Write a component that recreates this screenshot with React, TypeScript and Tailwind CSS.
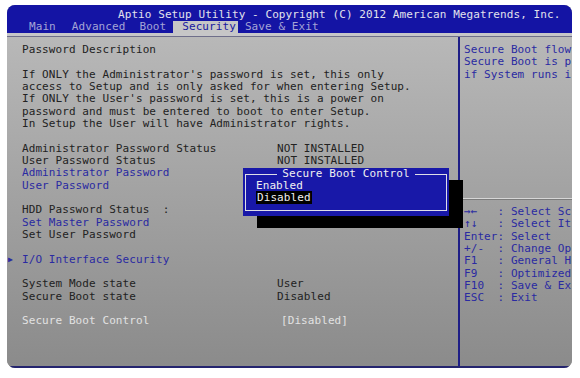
const MONO = "font-['DejaVu_Sans_Mono',monospace] text-[11px] tracking-[0.08px] leading-[12.36px] whitespace-pre";

type Row = { label?: string; value?: string; tone?: "dark" | "blue" | "light"; arrow?: boolean };

const rows: Row[] = [
  { label: "Password Description" },
  {},
  { label: "If ONLY the Administrator's password is set, this only" },
  { label: "access to Setup and is only asked for when entering Setup." },
  { label: "If ONLY the User's password is set, this is a power on" },
  { label: "password and must be entered to boot to enter Setup." },
  { label: "In Setup the User will have Administrator rights." },
  {},
  { label: "Administrator Password Status", value: "NOT INSTALLED" },
  { label: "User Password Status", value: "NOT INSTALLED" },
  { label: "Administrator Password", tone: "blue" },
  { label: "User Password", tone: "blue" },
  {},
  { label: "HDD Password Status  :" },
  { label: "Set Master Password", tone: "blue" },
  { label: "Set User Password" },
  {},
  { label: "I/O Interface Security", tone: "blue", arrow: true },
  {},
  { label: "System Mode state", value: "User" },
  { label: "Secure Boot state", value: "Disabled" },
  {},
  { label: "Secure Boot Control", value: "[Disabled]", tone: "light" },
];

// help panel is cut at the screen edge in the photo
const keys = [
  "→←   : Select Sc",
  "↑↓   : Select It",
  "Enter: Select",
  "+/-  : Change Op",
  "F1   : General H",
  "F9   : Optimized",
  "F10  : Save & Ex",
  "ESC  : Exit",
];

function toneClass(tone?: Row["tone"]) {
  if (tone === "blue") return "text-[#2a2aa2]";
  if (tone === "light") return "text-[#e2e2e2]";
  return "text-[#222222]";
}

export default function App() {
  return (
    <div className={`min-h-screen bg-white pt-[5px] pl-[7px] ${MONO}`}>
      <div className="flex h-[363px] w-[565px] flex-col overflow-hidden rounded-[8px] bg-[#8a8a8a]">
        {/* header */}
        <div className="h-[28px] bg-[#1414a4]">
          <div className="h-[15px] pl-[111px] pt-[4px] text-[#e2e2ec]">
            Aptio Setup Utility - Copyright (C) 2012 American Megatrends, Inc.
          </div>
          <div className="flex h-[13px] items-end pl-[22px] text-[#a4a4d6]">
            <span>Main</span>
            <span className="ml-[16px]">Advanced</span>
            <span className="ml-[14px]">Boot</span>
            <span className="ml-[7px] bg-[#c6c6c6] pl-[9px] pr-[2px] text-[#1818a0]">Security</span>
            <span className="ml-[7px]">Save & Exit</span>
          </div>
        </div>
        <div className="h-[3px] bg-[#c6c6c8]" />
        <div className="h-[1px] bg-[#6e6e8a]" />

        {/* body */}
        <div className="relative flex flex-1 bg-gradient-to-b from-[#b8b8b8] to-[#8b8b8b]">
          <div className="w-[451px] pt-[7px]">
            {rows.map((r, i) => (
              <div key={i} className={`flex h-[12.33px] ${toneClass(r.tone)}`}>
                <span className="flex w-[15px] items-center pl-[1px]">
                  {r.arrow && <span className="text-[8px] leading-none text-[#2a2aa2]">▶</span>}
                </span>
                <span className="w-[255px]">{r.label ?? ""}</span>
                {r.value && (
                  <span className={r.tone === "light" ? "ml-[4px]" : ""}>{r.value}</span>
                )}
              </div>
            ))}
          </div>

          <div className="w-[2px] bg-[#1e1e86]" />

          <div className="flex-1 overflow-hidden pt-[7px] pl-[4px] text-[#2a2aa2]">
            <div>Secure Boot flow</div>
            <div>Secure Boot is p</div>
            <div>if System runs i</div>
            <div className="h-[117px]" />
            <div className="-ml-[4px] h-[1px] bg-[#d6d6d6]" />
            <div className="-ml-[4px] h-[1px] bg-[#7c7c7c]" />
            <div className="h-[6px]" />
            {keys.map((k) => (
              <div key={k} className="h-[12.33px]">{k}</div>
            ))}
          </div>

          {/* popup dialog */}
          <div className="absolute left-[250px] top-[143px] h-[48px] w-[206px] bg-black" />
          <div className="absolute left-[236px] top-[131px] h-[48px] w-[206px] bg-[#1818a8] px-[2px] pt-[6px] pb-[5px]">
            <div className="relative h-full border border-[#dedee8] pl-[10px] pt-[5px] text-[#f0f0f0]">
              <div className="absolute -top-[7px] left-0 right-0 flex justify-center">
                <span className="bg-[#1818a8] px-[5px]">Secure Boot Control</span>
              </div>
              <div>Enabled</div>
              <div>
                <span className="bg-black px-[1px]">Disabled</span>
              </div>
            </div>
          </div>
        </div>
        <div className="h-[2px] bg-[#24246e]" />
      </div>
    </div>
  );
}
